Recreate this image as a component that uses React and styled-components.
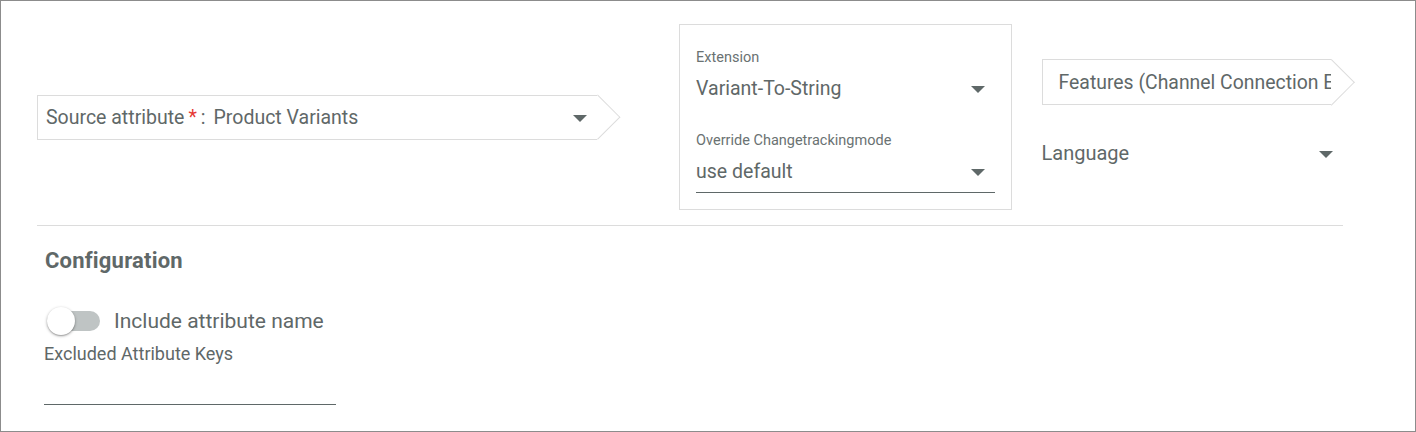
import React from 'react';
import styled, { createGlobalStyle } from 'styled-components';

const GlobalStyle = createGlobalStyle`
  html, body {
    margin: 0;
    padding: 0;
    background: #fff;
  }
  body {
    font-family: Roboto, "Liberation Sans", sans-serif;
    color: #5f6868;
  }
`;

const Frame = styled.div`
  width: 1416px;
  height: 432px;
  box-sizing: border-box;
  border: 1px solid #8c8c8c;
  padding: 23px 72px 0 36px;
  overflow: hidden;
`;

const TopRow = styled.div`
  display: flex;
  align-items: center;
`;

const ArrowField = styled.div`
  position: relative;
  box-sizing: border-box;
  width: ${(p) => p.$width}px;
  height: ${(p) => p.$height}px;
  border: 1px solid #dcdcdc;
  border-right: none;
  display: flex;
  align-items: center;
  padding-left: ${(p) => p.$pad}px;
  margin-right: ${(p) => p.$gap || 0}px;
  align-self: ${(p) => (p.$top ? 'flex-start' : 'auto')};
  background: #fff;

  &::after {
    content: '';
    position: absolute;
    top: 50%;
    right: 0;
    width: ${(p) => p.$height / Math.SQRT2}px;
    height: ${(p) => p.$height / Math.SQRT2}px;
    box-sizing: border-box;
    border-top: 1px solid #dcdcdc;
    border-right: 1px solid #dcdcdc;
    transform: translate(calc(50% + 1px), -50%) rotate(45deg);
  }
`;

const FieldText = styled.span`
  font-size: ${(p) => p.$size || 18}px;
  white-space: nowrap;
  flex: 1;
  overflow: hidden;
  color: #5f6868;
`;

const Required = styled.span`
  color: #e53935;
  margin: 0 4px 0 4px;
`;

const Value = styled.span`
  margin-left: 8px;
`;

const Caret = styled.span`
  flex: none;
  width: 0;
  height: 0;
  border-left: 7px solid transparent;
  border-right: 7px solid transparent;
  border-top: 7px solid #5f6868;
  margin: 2px ${(p) => p.$right || 10}px 0 8px;
`;

const Card = styled.div`
  box-sizing: border-box;
  width: 333px;
  height: 186px;
  border: 1px solid #dcdcdc;
  padding: 24px 16px 0;
  margin-right: 30px;
  display: flex;
  flex-direction: column;
`;

const Label = styled.div`
  font-size: 14.5px;
  line-height: 18px;
  color: #6a7272;
`;

const Select = styled.div`
  display: flex;
  align-items: center;
  height: ${(p) => p.$height || 30}px;
  box-sizing: border-box;
  border-bottom: ${(p) => (p.$underline ? '1px solid #5f6868' : 'none')};
  margin-top: ${(p) => p.$mt || 0}px;
  margin-bottom: ${(p) => p.$mb || 0}px;
`;

const SideColumn = styled.div`
  align-self: flex-start;
  margin-top: 35px;
  width: 302px;
  display: flex;
  flex-direction: column;
`;

const Divider = styled.hr`
  margin: 15px 0 0;
  border: none;
  border-top: 1px solid #dcdcdc;
`;

const Config = styled.section`
  padding-left: 8px;
`;

const Heading = styled.h2`
  margin: 22px 0 0;
  font-size: 22px;
  line-height: 26px;
  font-weight: 700;
  letter-spacing: 0.2px;
  color: #5f6868;
`;

const ToggleRow = styled.label`
  display: flex;
  align-items: center;
  height: 30px;
  margin-top: 32px;
  margin-left: 2px;
`;

const Track = styled.span`
  position: relative;
  width: 53px;
  height: 20px;
  border-radius: 10px;
  background: #bfc4c4;
  margin-right: 14px;
`;

const Thumb = styled.span`
  position: absolute;
  left: 0;
  top: -4px;
  width: 28px;
  height: 28px;
  border-radius: 50%;
  background: #fff;
  box-shadow: 0 1px 3px rgba(0, 0, 0, 0.35), 0 1px 1px rgba(0, 0, 0, 0.14);
`;

const ToggleText = styled.span`
  font-size: 21px;
  color: #5f6868;
`;

const SubLabel = styled.div`
  font-size: 18px;
  line-height: 21px;
  margin-top: 7px;
  margin-left: -1px;
  color: #5f6868;
`;

const TextInput = styled.div`
  width: 292px;
  height: 41px;
  margin-left: -1px;
  box-sizing: border-box;
  border-bottom: 1px solid #5f6868;
`;

export default function App() {
  return (
    <>
      <GlobalStyle />
      <Frame>
        <TopRow>
          <ArrowField $width={561} $height={45} $pad={8} $gap={82}>
            <FieldText $size={19.5}>
              Source attribute<Required>*</Required>:<Value>Product Variants</Value>
            </FieldText>
            <Caret $right={10} />
          </ArrowField>

          <Card>
            <Label>Extension</Label>
            <Select $height={42} $mb={23}>
              <FieldText $size={19.5}>Variant-To-String</FieldText>
              <Caret />
            </Select>
            <Label>Override Changetrackingmode</Label>
            <Select $height={43} $underline>
              <FieldText $size={19.5}>use default</FieldText>
              <Caret />
            </Select>
          </Card>

          <SideColumn>
            <ArrowField $width={289} $height={46} $pad={16} $top>
              <FieldText $size={19.4}>Features (Channel Connection Export)</FieldText>
            </ArrowField>
            <Select $height={30} $mt={33}>
              <FieldText $size={20}>Language</FieldText>
              <Caret />
            </Select>
          </SideColumn>
        </TopRow>

        <Divider />

        <Config>
          <Heading>Configuration</Heading>
          <ToggleRow>
            <Track>
              <Thumb />
            </Track>
            <ToggleText>Include attribute name</ToggleText>
          </ToggleRow>
          <SubLabel>Excluded Attribute Keys</SubLabel>
          <TextInput />
        </Config>
      </Frame>
    </>
  );
}
